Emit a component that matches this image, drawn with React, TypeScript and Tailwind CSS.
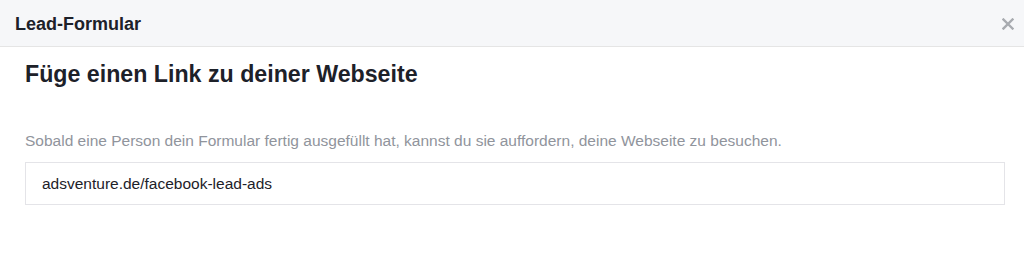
import React from "react";

export default function App() {
  return (
    <div className="w-[1024px] h-[255px] bg-white overflow-hidden" style={{ fontFamily: '"Liberation Sans", Arial, sans-serif' }}>
      <div className="h-[47px] bg-[#f6f7f9] border-b border-[#e5e5e5] flex items-center justify-between pl-[15px] pr-[10px]">
        <span className="text-[18px] font-bold text-[#1d2129] leading-none mt-[1px]">Lead-Formular</span>
        <svg width="12" height="12" viewBox="0 0 12 12" className="mt-[2px]">
          <path d="M1.5 1.5 L10.5 10.5 M10.5 1.5 L1.5 10.5" stroke="#a8abb0" strokeWidth="2.4" strokeLinecap="square" />
        </svg>
      </div>
      <div className="pl-[25px] pr-[19px]">
        <h1 className="mt-[15px] text-[23.2px] font-bold text-[#1d2129] leading-[24px]">Füge einen Link zu deiner Webseite</h1>
        <p className="mt-[46px] text-[15.5px] text-[#90949c] leading-[18px]">
          Sobald eine Person dein Formular fertig ausgefüllt hat, kannst du sie auffordern, deine Webseite zu besuchen.
        </p>
        <div className="mt-[12px] h-[43px] border border-[#e4e4e8] flex items-center pl-[16px] text-[15.5px] text-[#1d2129]">
          adsventure.de/facebook-lead-ads
        </div>
      </div>
    </div>
  );
}
